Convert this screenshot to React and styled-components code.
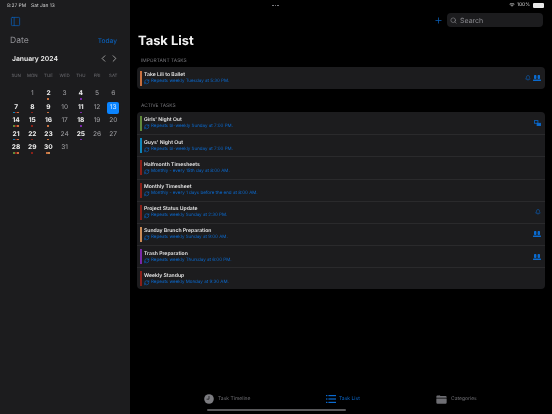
import styled, { createGlobalStyle } from "styled-components";
import { ChevronLeft, ChevronRight, PanelLeft, Plus, RefreshCw, Search, Bell } from "lucide-react";
import { IoFolder, IoWifi } from "react-icons/io5";

const Global = createGlobalStyle`
  html, body { margin: 0; padding: 0; background: #000; }
  body { font-family: Inter, "Noto Sans", sans-serif; color: #fff; text-rendering: geometricPrecision; }
  * { box-sizing: border-box; }
`;

const colors = {
  orange: "#c8703f",
  green: "#5f8a3a",
  blue: "#0f85b8",
  red: "#8a2018",
  tan: "#cc8a55",
  purple: "#7a28a8",
};

const important = [
  { title: "Take Lili to Ballet", sub: "Repeats weekly Tuesday at 5:30 PM.", color: "orange", icons: ["bell", "people"] },
];
const active = [
  { title: "Girls' Night Out", sub: "Repeats bi-weekly Sunday at 7:00 PM.", color: "green", icons: ["share"] },
  { title: "Guys' Night Out", sub: "Repeats bi-weekly Sunday at 7:00 PM.", color: "blue", icons: [] },
  { title: "Halfmonth Timesheets", sub: "Monthly - every 15th day at 8:00 AM.", color: "red", icons: [] },
  { title: "Monthly Timesheet", sub: "Monthly - every 1 days before the end at 8:00 AM.", color: "red", icons: [] },
  { title: "Project Status Update", sub: "Repeats weekly Sunday at 2:30 PM.", color: "red", icons: ["bell"] },
  { title: "Sunday Brunch Preparation", sub: "Repeats weekly Sunday at 9:00 AM.", color: "tan", icons: ["people"] },
  { title: "Trash Preparation", sub: "Repeats weekly Thursday at 6:00 PM.", color: "purple", icons: ["people"] },
  { title: "Weekly Standup", sub: "Repeats weekly Monday at 9:30 AM.", color: "red", icons: [] },
];

const dots = {
  2: ["orange"], 4: ["purple"], 7: ["blue", "red", "orange"], 8: ["red"], 9: ["orange"], 11: ["purple"],
  14: ["green", "red", "orange"], 15: ["red"], 16: ["orange"], 18: ["purple"],
  21: ["blue", "red", "orange"], 22: ["red"], 23: ["orange"], 25: ["purple"],
  28: ["green", "red", "orange"], 29: ["red"], 30: ["orange", "tan"],
};

const Page = styled.div`
  position: relative;
  display: flex;
  width: 552px;
  height: 414px;
  overflow: hidden;
  background: #000;
`;
const Sidebar = styled.aside`
  display: flex;
  flex-direction: column;
  width: 130px;
  height: 100%;
  background: #1c1c1e;
  padding: 3px 8px 0 7px;
`;
const StatusText = styled.div`
  font-size: 4.9px;
  line-height: 6px;
  color: #d8d8d8;
  display: flex;
  gap: 5px;
  will-change: transform;
`;
const SidebarToggle = styled.div`
  display: flex;
  color: #0a5fb8;
  margin: 3px 0 0 3px;
  height: 18px;
  align-items: center;
`;
const DateRow = styled.div`
  display: flex;
  justify-content: space-between;
  align-items: center;
  margin-top: 4px;
  height: 14px;
  will-change: transform;
`;
const DateLabel = styled.span`
  font-size: 8.6px;
  color: #8e8e93;
  margin-left: 3px;
`;
const TodayLink = styled.span`
  font-size: 6.6px;
  font-weight: 500;
  color: #0a5fb8;
  margin-right: 5px;
`;
const MonthRow = styled.div`
  display: flex;
  justify-content: space-between;
  align-items: center;
  margin-top: 3px;
  height: 14px;
  padding: 0 2px 0 5px;
  will-change: transform;
`;
const MonthTitle = styled.span`
  font-size: 6.8px;
  font-weight: 600;
  color: #eee;
`;
const MonthNav = styled.div`
  display: flex;
  color: #c8c8c8;
`;
const CalGrid = styled.div`
  display: grid;
  grid-template-columns: repeat(7, 16.2px);
  grid-template-rows: 18px;
  grid-auto-rows: 13.55px;
  margin: 5px 0 0 1px;
  justify-items: center;
  will-change: transform;
`;
const DayName = styled.div`
  font-size: 4.4px;
  color: #6e6e73;
  line-height: 13px;
  grid-row: 1;
`;
const DayCell = styled.div`
  width: 12px;
  height: 12.5px;
  display: flex;
  flex-direction: column;
  align-items: center;
  padding-top: 2px;
  font-size: 6.6px;
  line-height: 7px;
  font-weight: ${(p) => (p.$bold ? 700 : 400)};
  color: ${(p) => (p.$today ? "#cfe6ff" : p.$bold ? "#eee" : "#a0a0a4")};
  background: ${(p) => (p.$today ? "#0a84ff" : "transparent")};
  border-radius: 2px;
`;
const DotRow = styled.div`
  display: flex;
  height: 1.5px;
  margin-top: 1px;
`;
const Dot = styled.span`
  width: 2px;
  height: 1.5px;
  background: ${(p) => colors[p.$color]};
`;
const Main = styled.main`
  flex: 1;
  display: flex;
  flex-direction: column;
  padding: 0 7px;
  min-width: 0;
`;
const StatusRight = styled.div`
  display: flex;
  justify-content: flex-end;
  align-items: center;
  gap: 2px;
  height: 10px;
  font-size: 4.9px;
  color: #d8d8d8;
  padding-right: 1px;
  will-change: transform;
`;
const Battery = styled.span`
  width: 11px;
  height: 5px;
  background: #e8e8e8;
  border-radius: 1px;
  margin-left: 1px;
`;
const Toolbar = styled.div`
  display: flex;
  justify-content: flex-end;
  align-items: center;
  gap: 4px;
  height: 14px;
  margin-top: 3px;
  padding-right: 2px;
  color: #0a5fb8;
  will-change: transform;
`;
const SearchBox = styled.div`
  display: flex;
  align-items: center;
  gap: 3px;
  width: 96px;
  height: 14px;
  padding-left: 3px;
  border-radius: 4px;
  background: #1c1c1e;
  color: #8e8e93;
  font-size: 7px;
`;
const PageTitle = styled.h1`
  margin: 6px 0 0 1px;
  font-size: 12.9px;
  line-height: 17px;
  font-weight: 700;
  color: #f2f2f2;
  will-change: transform;
`;
const SectionLabel = styled.div`
  margin: ${(p) => p.$gap}px 0 0 4px;
  font-size: 4.9px;
  line-height: 6px;
  color: #77777c;
  will-change: transform;
`;
const Card = styled.section`
  margin-top: 3px;
  background: #1c1c1e;
  border-radius: 4px;
  overflow: hidden;
`;
const Row = styled.div`
  display: flex;
  align-items: center;
  height: 22.15px;
  padding: 0 4px 0 3px;
  border-top: ${(p) => (p.$first ? "none" : "0.5px solid #2a2a2c")};
`;
const ColorBar = styled.span`
  width: 2px;
  height: 15px;
  background: ${(p) => colors[p.$color]};
`;
const RowBody = styled.div`
  flex: 1;
  margin-left: 2px;
  padding-top: 1px;
  min-width: 0;
  will-change: transform;
`;
const RowTitle = styled.div`
  font-size: 5.1px;
  line-height: 7px;
  font-weight: 600;
  color: #e8e8e8;
`;
const RowSub = styled.div`
  display: flex;
  align-items: center;
  gap: 1.5px;
  font-size: 4.5px;
  line-height: 6px;
  color: #0a6ad0;
`;
const RowIcons = styled.div`
  display: flex;
  align-items: center;
  gap: 2px;
  color: #0a6bd0;
`;
const TabBar = styled.nav`
  margin-top: auto;
  display: flex;
  height: 26px;
  padding: 4px 0 0 67px;
  will-change: transform;
`;
const Tab = styled.div`
  display: flex;
  align-items: center;
  gap: ${(p) => p.$gap}px;
  height: 14px;
  width: ${(p) => p.$w}px;
  font-size: 5px;
  color: ${(p) => (p.$on ? "#0a6ad0" : "#6e6e73")};
`;
const HomeBar = styled.div`
  position: absolute;
  left: 207px;
  bottom: 3px;
  width: 139px;
  height: 2px;
  border-radius: 1px;
  background: #58585a;
`;
const TopDots = styled.div`
  position: absolute;
  left: 272px;
  top: 4.5px;
  display: flex;
  gap: 1px;
`;
const TopDot = styled.span`
  width: 1.7px;
  height: 1.7px;
  border-radius: 50%;
  background: #8e8e93;
`;

function ShareIcon() {
  return (
    <svg width="7" height="6.5" viewBox="0 0 8 7" fill="none" stroke="currentColor" strokeWidth="0.9">
      <rect x="0.5" y="0.5" width="4" height="3" />
      <rect x="3.5" y="3.5" width="4" height="3" fill="currentColor" />
    </svg>
  );
}

function PeopleIcon() {
  return (
    <svg width="8" height="6" viewBox="0 0 8 6" fill="currentColor">
      <rect x="1" y="0" width="2.4" height="4" rx="0.8" />
      <rect x="4.6" y="0" width="2.4" height="4" rx="0.8" />
      <rect x="0" y="4.5" width="8" height="1.5" rx="0.4" />
    </svg>
  );
}

function ClockIcon() {
  return (
    <svg width="10" height="10" viewBox="0 0 10 10">
      <circle cx="5" cy="5" r="4.8" fill="#7c7c80" />
      <path d="M5 2v3.2H2.6" fill="none" stroke="#1c1c1e" strokeWidth="0.8" />
    </svg>
  );
}

function ListIcon() {
  return (
    <svg width="10" height="8" viewBox="0 0 10 8" fill="#0a6ad0">
      <rect x="0" y="0" width="1.4" height="1.2" />
      <rect x="2.4" y="0" width="7.6" height="1.2" />
      <rect x="0" y="3.4" width="1.4" height="1.2" />
      <rect x="2.4" y="3.4" width="7.6" height="1.2" />
      <rect x="0" y="6.8" width="1.4" height="1.2" />
      <rect x="2.4" y="6.8" width="7.6" height="1.2" />
    </svg>
  );
}

function TaskIcon({ name }) {
  if (name === "bell") return <Bell size={6} strokeWidth={2} />;
  if (name === "people") return <PeopleIcon />;
  return <ShareIcon />;
}

function TaskRow({ task, first }) {
  return (
    <Row $first={first}>
      <ColorBar $color={task.color} />
      <RowBody>
        <RowTitle>{task.title}</RowTitle>
        <RowSub>
          <RefreshCw size={5.5} strokeWidth={2.4} />
          {task.sub}
        </RowSub>
      </RowBody>
      <RowIcons>
        {task.icons.map((i) => (
          <TaskIcon key={i} name={i} />
        ))}
      </RowIcons>
    </Row>
  );
}

export default function App() {
  const days = Array.from({ length: 31 }, (_, i) => i + 1);
  return (
    <Page>
      <Global />
      <Sidebar>
        <StatusText>
          <span>8:27 PM</span>
          <span>Sat Jan 13</span>
        </StatusText>
        <SidebarToggle>
          <PanelLeft size={11} strokeWidth={1.6} />
        </SidebarToggle>
        <DateRow>
          <DateLabel>Date</DateLabel>
          <TodayLink>Today</TodayLink>
        </DateRow>
        <MonthRow>
          <MonthTitle>January 2024</MonthTitle>
          <MonthNav>
            <ChevronLeft size={11} strokeWidth={1.6} />
            <ChevronRight size={11} strokeWidth={1.6} />
          </MonthNav>
        </MonthRow>
        <CalGrid>
          {["SUN", "MON", "TUE", "WED", "THU", "FRI", "SAT"].map((d) => (
            <DayName key={d}>{d}</DayName>
          ))}
          {days.map((d) => (
            <DayCell
              key={d}
              $bold={!!dots[d]}
              $today={d === 13}
              style={d === 1 ? { gridColumnStart: 2 } : undefined}
            >
              {d}
              <DotRow>
                {(dots[d] || []).map((c, i) => (
                  <Dot key={i} $color={c} />
                ))}
              </DotRow>
            </DayCell>
          ))}
        </CalGrid>
      </Sidebar>
      <Main>
        <StatusRight>
          <IoWifi size={6} />
          <span>100%</span>
          <Battery />
        </StatusRight>
        <Toolbar>
          <Plus size={9} strokeWidth={2} />
          <SearchBox>
            <Search size={7} strokeWidth={2} />
            Search
          </SearchBox>
        </Toolbar>
        <PageTitle>Task List</PageTitle>
        <SectionLabel $gap={8}>IMPORTANT TASKS</SectionLabel>
        <Card>
          {important.map((t, i) => (
            <TaskRow key={t.title} task={t} first={i === 0} />
          ))}
        </Card>
        <SectionLabel $gap={14}>ACTIVE TASKS</SectionLabel>
        <Card>
          {active.map((t, i) => (
            <TaskRow key={t.title} task={t} first={i === 0} />
          ))}
        </Card>
        <TabBar>
          <Tab $w={122} $gap={4}>
            <ClockIcon />
            Task Timeline
          </Tab>
          <Tab $w={110} $gap={3} $on>
            <ListIcon />
            Task List
          </Tab>
          <Tab $w={60} $gap={4}>
            <IoFolder size={11} color="#6e6e73" />
            Categories
          </Tab>
        </TabBar>
      </Main>
      <TopDots>
        <TopDot />
        <TopDot />
        <TopDot />
      </TopDots>
      <HomeBar />
    </Page>
  );
}
